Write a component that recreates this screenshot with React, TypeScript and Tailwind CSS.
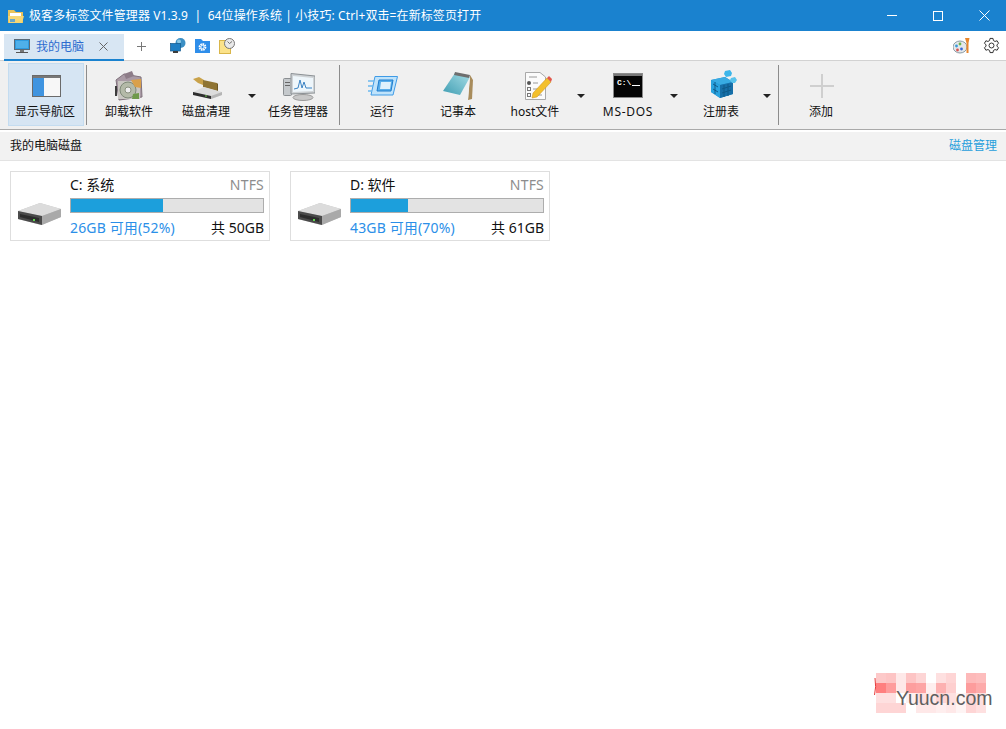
import React from "react";

const cjk = "font-['Noto_Sans','Noto_Sans_CJK_SC',sans-serif]";

const NavIcon = () => (
  <svg width="29" height="32" viewBox="0 -5 29 32">
    <rect x="0.5" y="0.5" width="28" height="21" fill="#f4f4f4" stroke="#6a6a6a" />
    <rect x="1" y="3" width="11" height="18" fill="#3f94e0" />
    <rect x="12" y="3" width="16" height="18" fill="#f7f7f7" />
    <rect x="1" y="1" width="27" height="2" fill="#777" />
  </svg>
);

const UninstallIcon = () => (
  <svg width="28" height="32" viewBox="0 -1 28 32">
    <path d="M1 9 L9 3 L26 6 L27 26 L4 29 Z" fill="#a99aa5" stroke="#7f717b" />
    <path d="M9 3 L17 0 L19 5 L11 8 Z" fill="#8d7c88" />
    <rect x="3" y="10" width="22" height="18" fill="#c9c6c2" />
    <circle cx="13" cy="19" r="8" fill="#b4baa8" stroke="#7e8a78" />
    <circle cx="13" cy="19" r="3" fill="#eeeeee" stroke="#8a9080" />
    <path d="M16 9 L26 8 L26 17 L20 16 Z" fill="#d9a04a" />
    <rect x="0" y="15" width="2" height="10" fill="#3c3c3c" />
    <path d="M18 23 L24 22 L24 28 L17 28 Z" fill="#6f9a4a" />
  </svg>
);

const CleanIcon = () => (
  <svg width="32" height="32" viewBox="-3 -7 32 32">
    <path d="M0 2 L6 0 L11 3 L10 8 L5 6 Z" fill="#c9a24a" />
    <path d="M10 3 L24 6 L24 14 L10 10 Z" fill="#8f7433" />
    <path d="M24 6 L25 7 L25 14 L24 14 Z" fill="#6e5824" />
    <path d="M0 15 L11 10 L29 15 L29 18 L18 22 L0 18 Z" fill="#dcdcdc" />
    <path d="M0 15 L18 19 L18 22 L0 18 Z" fill="#2e2e2e" />
    <path d="M18 19 L29 15 L29 18 L18 22 Z" fill="#b5b5b5" />
    <rect x="12" y="18.500" width="2" height="1" fill="#6fd14f" />
  </svg>
);

const TaskIcon = () => (
  <svg width="33" height="32" viewBox="-1 -3 33 32">
    <rect x="0.500" y="5.500" width="8" height="17" rx="1" fill="#c5c9cc" stroke="#8b8f92" />
    <rect x="2" y="9" width="5" height="1" fill="#666" />
    <rect x="2" y="12" width="5" height="1" fill="#666" />
    <path d="M8 0.500 L32 3 L32 20 L8 21 Z" fill="#cfd3d6" stroke="#8b9094" />
    <path d="M10 3 L30 5 L30 18 L10 19 Z" fill="#eef6fb" />
    <path d="M11 16 L15 15 L17 7 L19 15 L21 9 L23 15 L29 15" fill="none" stroke="#3b83c4" />
    <ellipse cx="20" cy="24.500" rx="10" ry="3" fill="#c8c8c8" stroke="#9a9a9a" />
  </svg>
);

const RunIcon = () => (
  <svg width="32" height="32" viewBox="-2 -6 32 32">
    <path d="M7 0.500 L29.500 0.500 L25 19 L3 19 Z" fill="#bfe3fb" stroke="#3f9be6" />
    <path d="M11 4 L25 4 L23 15 L9 15 Z" fill="#5aaeea" stroke="#1e7ccd" />
    <path d="M13 6 L23 6 L22 13 L12 13 Z" fill="#dff1fc" />
    <path d="M0 5 H6 M0 10 H5 M0 15 H4" stroke="#6bb8ee" strokeWidth="1.500" />
  </svg>
);

const NotepadIcon = () => (
  <svg width="30" height="32" viewBox="0 -2 30 32">
    <defs>
      <linearGradient id="noteCover" x1="0" y1="1" x2="1" y2="0">
        <stop offset="0" stopColor="#3f9db2" />
        <stop offset="1" stopColor="#a6dde6" />
      </linearGradient>
    </defs>
    <path d="M27 3 L30 8 L29 27 L25 28 Z" fill="#a88c5c" />
    <path d="M27 5 L25 28 L12 25 L0 19 Z" fill="#eef1f2" />
    <path d="M12 1 L27 5 L17 23 L0 19 Z" fill="url(#noteCover)" />
    <path d="M12 0 L27 3 L26 6 L11 3 Z" fill="#6e6e6e" />
  </svg>
);

const HostIcon = () => (
  <svg width="34" height="32" viewBox="-7 -2 34 32">
    <path d="M0.500 0.500 H15 L20.500 5 V27.500 H0.500 Z" fill="#fbfbfb" stroke="#a9a9a9" />
    <circle cx="4" cy="11" r="2" fill="#555" />
    <path d="M8 11 H13 M8 17 H15 M8 23 H17 M4 5 H12" stroke="#9a9a9a" />
    <rect x="2.500" y="15.500" width="3" height="3" fill="none" stroke="#777" />
    <rect x="2.500" y="21.500" width="3" height="3" fill="none" stroke="#777" />
    <path d="M8 21 L22 6 L26 10 L12 25 L7 26 Z" fill="#f3c02c" stroke="#c98f1a" strokeWidth="0.500" />
    <path d="M22 6 L24 4 L27 7 L26 10 Z" fill="#e2574c" />
  </svg>
);

const DosIcon = () => (
  <svg width="30" height="32" viewBox="0 -3 30 32">
    <rect x="0.500" y="0.500" width="29" height="24" fill="#050505" stroke="#8a8a8a" />
    <rect x="1" y="1" width="28" height="2" fill="#777" />
    <text x="4" y="12" fontSize="8" fontWeight="700" fill="#fff" fontFamily="'Liberation Mono', monospace">C:\</text>
    <rect x="19" y="12" width="8" height="1" fill="#fff" />
  </svg>
);

const RegIcon = () => (
  <svg width="32" height="32" viewBox="-6 0 32 32">
    <path d="M0 10 L14 7 L22 12 L22 24 L9 28 L0 22 Z" fill="#1f8ecf" />
    <path d="M0 10 L14 7 L22 12 L9 15 Z" fill="#38abe3" />
    <path d="M0 10 L9 15 L9 28 L0 22 Z" fill="#2aa3df" />
    <path d="M9 15 L22 12 L22 24 L9 28 Z" fill="#176fa8" />
    <path d="M2 14 L7 17 M2 19 L7 22 M11 19 L20 16 M11 23 L20 20 M4 12 L4 24 M13 15 L13 27 M17 14 L17 26" stroke="#0e5a8a" />
    <path d="M14 1 L19 0 L21 3 L20 6 L15 7 L13 4 Z" fill="#3cb6ea" />
    <path d="M20 8 L24 7 L26 10 L24 13 L21 13 L19 10 Z" fill="#58c3ec" />
  </svg>
);

const PlusIcon = () => (
  <svg width="26" height="32" viewBox="-2 -4 26 32">
    <path d="M12 0 V24 M0 12 H24" stroke="#cfcfcf" strokeWidth="2" />
  </svg>
);

const DriveIcon = () => (
  <svg width="43" height="22" viewBox="0 0 43 22">
    <path d="M0 8 L22 0 L43 6 L43 14 L23 22 L0 16 Z" fill="#c4c4c4" />
    <path d="M0 8 L22 0 L43 6 L24 13 Z" fill="#dcdcdc" />
    <path d="M0 8 L24 13 L24 22 L0 16 Z" fill="#4a4a4a" />
    <path d="M24 13 L43 6 L43 14 L24 22 Z" fill="#a9a9a9" />
    <path d="M2 11 L21 15 L21 19 L2 14 Z" fill="#2c2c2c" />
    <rect x="15" y="16" width="2" height="2" fill="#5fd34f" />
  </svg>
);

const TabMonitor = () => (
  <svg width="16" height="15" viewBox="0 0 16 15">
    <rect x="0.500" y="0.500" width="15" height="10" fill="#2e9be0" stroke="#5a6a78" />
    <rect x="2" y="2" width="12" height="7" fill="#4fb0ea" />
    <rect x="6" y="11" width="4" height="2" fill="#777" />
    <rect x="2" y="13" width="12" height="1" fill="#555" />
  </svg>
);

const Globe = () => (
  <svg width="16" height="16" viewBox="0 0 16 16">
    <circle cx="10.500" cy="5" r="5" fill="#3b8fc4" />
    <circle cx="9" cy="3.500" r="2" fill="#8cc9e6" />
    <rect x="0.500" y="5.500" width="10" height="7.500" fill="#1f7fc4" stroke="#14598c" strokeWidth="0.700" />
    <rect x="3" y="13" width="5" height="2" fill="#3c3c3c" />
  </svg>
);

const BlueFolder = () => (
  <svg width="15" height="15" viewBox="0 0 15 15">
    <path d="M0 1 H6 L8 3 H15 V15 H0 Z" fill="#2f8eea" />
    <circle cx="7.500" cy="9" r="3" fill="none" stroke="#fff" strokeWidth="1.800" strokeDasharray="1.600 0.700" />
    <circle cx="7.500" cy="9" r="1.700" fill="none" stroke="#fff" />
  </svg>
);

const ClockNote = () => (
  <svg width="16" height="16" viewBox="0 0 16 16">
    <rect x="0.500" y="2.500" width="11" height="13" fill="#fbe28a" stroke="#d9b64a" />
    <circle cx="10.500" cy="5.500" r="5" fill="#e9e9e9" stroke="#777" />
    <path d="M10.500 5.500 L8.500 3.500 M10.500 5.500 L13 3.500" stroke="#555" strokeWidth="0.800" />
  </svg>
);

const Palette = () => (
  <svg width="17" height="16" viewBox="0 0 17 16">
    <ellipse cx="7" cy="9" rx="7" ry="6" fill="#e4e8ea" stroke="#8a9aa4" />
    <circle cx="3.500" cy="8" r="1.400" fill="#3a9ad9" />
    <circle cx="7" cy="6" r="1.400" fill="#6cb34a" />
    <circle cx="4.500" cy="12" r="1.400" fill="#d9534f" />
    <circle cx="8.500" cy="11" r="1.400" fill="#3a6ad9" />
    <path d="M12 0 H16.500 L15.500 5 L15.500 15 H13.500 L13.500 5 Z" fill="#e8862c" />
  </svg>
);

const Gear = () => (
  <svg width="17" height="17" viewBox="0 0 24 24" fill="none" stroke="#333" strokeWidth="1.400" strokeLinejoin="round">
    <path d="M9.900 2h4.200l.6 3 2.300 1.300 2.900-1 2.100 3.600-2.300 2v2.200l2.300 2-2.100 3.600-2.900-1-2.300 1.300-.6 3H9.900l-.6-3L7 17.700l-2.900 1-2.100-3.600 2.300-2v-2.200l-2.300-2L4.100 5.300l2.900 1 2.300-1.300z" />
    <circle cx="12" cy="12" r="3.500" />
  </svg>
);

const Arrow = () => (
  <div className="flex h-[68px] w-4 items-center justify-center pt-[1px]">
    <div className="h-0 w-0 border-x-[4px] border-t-[4px] border-x-transparent border-t-[#222]" />
  </div>
);

const Sep = ({ className = "" }: { className?: string }) => (
  <div className={`my-[4px] h-[60px] w-px shrink-0 bg-[#8c8c8c] ${className}`} />
);

const Tool = ({
  label,
  icon,
  active,
  labelClass = "",
}: {
  label: string;
  icon: React.ReactNode;
  active?: boolean;
  labelClass?: string;
}) => (
  <div
    className={`flex h-[63px] w-[76px] shrink-0 flex-col items-center border ${
      active ? "border-[#c4dcf0] bg-[#d6e5f3]" : "border-transparent"
    }`}
  >
    <div className="mt-[6px] flex h-[32px] items-start justify-center">{icon}</div>
    <div className={`mt-[1px] text-xs leading-[18px] whitespace-nowrap text-[#111] ${labelClass}`}>
      {label}
    </div>
  </div>
);

const DriveCard = ({
  name,
  free,
  total,
  pct,
}: {
  name: string;
  free: string;
  total: string;
  pct: string;
}) => (
  <div className="flex h-[70px] w-[260px] border border-[#dedede] bg-white">
    <div className="flex w-[59px] shrink-0 items-start pt-[31px] pl-[7px]">
      <DriveIcon />
    </div>
    <div className="flex w-[194px] flex-col text-sm">
      <div className="mt-[3px] flex h-[20px] items-center justify-between leading-5">
        <span className="text-[#111]">{name}</span>
        <span className="tracking-[0.2px] text-[#8d8d8d]">NTFS</span>
      </div>
      <div className="mt-[3px] h-[15px] border border-[#adadad] bg-[#e3e3e3]">
        <div className={`h-full bg-[#1c9fdc] ${pct}`} />
      </div>
      <div className="mt-[5px] flex items-center justify-between leading-5">
        <span className="tracking-[0.15px] text-[#2b8fe8]">{free}</span>
        <span className="text-[#111]">{total}</span>
      </div>
    </div>
  </div>
);

const mosaic = [
  ["bg-[#fdc9c9]", "bg-[#fdc4c4]", "bg-[#fee8e8]", "bg-[#fdc4c4]", "bg-[#fdd5d5]", "bg-white", "bg-[#fee0e0]", "bg-[#fed5d5]", "bg-white", "bg-[#fdb9b9]", "bg-[#fdbdbd]"],
  ["bg-[#ff7f7f]", "bg-[#fe9c9c]", "bg-[#fee8e8]", "bg-[#fd9e9e]", "bg-[#fda4a4]", "bg-[#feeeee]", "bg-[#fdb0b0]", "bg-[#fecfcf]", "bg-white", "bg-[#fd9c9c]", "bg-[#fdaaaa]"],
  ["bg-[#fee0e0]", "bg-[#fee0e0]", "bg-white", "bg-[#fef0f0]", "bg-[#fee0e0]", "bg-[#fee8e8]", "bg-[#fed5d5]", "bg-[#fee0e0]", "bg-[#fef4f4]", "bg-[#fed5d5]", "bg-[#fee0e0]"],
  ["bg-[#fed5d5]", "bg-[#fed5d5]", "bg-[#fed5d5]", "bg-white", "bg-[#fee8e8]", "bg-[#fee8e8]", "bg-[#feeeee]", "bg-[#fee8e8]", "bg-[#fef4f4]", "bg-[#fed5d5]", "bg-[#fee0e0]"],
];

export default function App() {
  return (
    <div className={`relative h-[729px] w-[1006px] overflow-hidden bg-white ${cjk}`}>
      {/* title bar */}
      <div className="flex h-[31px] items-center bg-[#1a82cf] pl-[8px] text-white">
        <svg width="16" height="14" viewBox="0 0 16 14" className="mr-[5px]">
          <path d="M0 1 H6 L8 3 H15 V14 H0 Z" fill="#e8c35a" />
          <rect x="2" y="4" width="11" height="3" fill="#fff" />
          <path d="M0 7 H16 L14 14 H1 Z" fill="#f6d775" />
          <rect x="2" y="10" width="5" height="3" fill="#6aa7c9" />
        </svg>
        <span className="text-xs tracking-[0.1px] whitespace-pre">极客多标签文件管理器 V1.3.9  |  64位操作系统 | 小技巧: Ctrl+双击=在新标签页打开</span>
        <div className="-mr-px ml-auto flex items-center">
          <div className="flex w-[46px] justify-center">
            <div className="h-px w-[10px] bg-white" />
          </div>
          <div className="flex w-[46px] justify-center">
            <div className="h-[10px] w-[10px] border border-white" />
          </div>
          <div className="flex w-[46px] justify-center">
            <svg width="11" height="11" viewBox="0 0 11 11">
              <path d="M0.500 0.500 L10.500 10.500 M10.500 0.500 L0.500 10.500" stroke="#fff" />
            </svg>
          </div>
        </div>
      </div>

      {/* tabs row */}
      <div className="flex h-[30px] border-b border-[#d2d2d2] pl-[4px]">
        <div className="mt-[3px] flex h-[27px] w-[120px] items-center border-b-2 border-[#1a82cf] bg-[#d8e6f3] pl-[10px]">
          <TabMonitor />
          <span className="ml-[6px] text-xs text-[#2d6ccf]">我的电脑</span>
          <svg width="9" height="9" viewBox="0 0 9 9" className="ml-[15px]">
            <path d="M0.500 0.500 L8.500 8.500 M8.500 0.500 L0.500 8.500" stroke="#666" />
          </svg>
        </div>
        <div className="mt-[1px] ml-[13px] flex h-[29px] items-center">
          <svg width="9" height="9" viewBox="0 0 9 9">
            <path d="M4.500 0 V9 M0 4.500 H9" stroke="#777" />
          </svg>
        </div>
        <div className="ml-[24px] flex h-[29px] items-center gap-[9px]">
          <Globe />
          <BlueFolder />
          <ClockNote />
        </div>
        <div className="mr-[6px] ml-auto flex h-[29px] items-center gap-[13px]">
          <Palette />
          <Gear />
        </div>
      </div>

      {/* toolbar */}
      <div className="flex h-[69px] border-b border-[#a9a9a9] bg-[#f0f0f0] pl-[8px]">
        <div className="mt-[2px] mr-[2px]">
          <Tool label="显示导航区" icon={<NavIcon />} active labelClass="pr-[2px]" />
        </div>
        <Sep />
        <div className="flex pt-[2px] pl-[4px]">
          <Tool label="卸载软件" icon={<UninstallIcon />} />
          <div className="ml-px flex">
            <Tool label="磁盘清理" icon={<CleanIcon />} />
            <div className="-mt-[2px]"><Arrow /></div>
          </div>
          <Tool label="任务管理器" icon={<TaskIcon />} />
        </div>
        <Sep className="ml-[3px]" />
        <div className="flex pt-[2px] pl-[4px]">
          <Tool label="运行" icon={<RunIcon />} />
          <Tool label="记事本" icon={<NotepadIcon />} />
          <div className="ml-px flex">
            <Tool label="host文件" icon={<HostIcon />} />
            <div className="-mt-[2px]"><Arrow /></div>
          </div>
          <div className="ml-px flex">
            <Tool label="MS-DOS" icon={<DosIcon />} labelClass="tracking-[0.7px]" />
            <div className="-mt-[2px]"><Arrow /></div>
          </div>
          <div className="ml-px flex">
            <Tool label="注册表" icon={<RegIcon />} />
            <div className="-mt-[2px]"><Arrow /></div>
          </div>
        </div>
        <Sep className="ml-[3px]" />
        <div className="flex pt-[2px] pl-[4px]">
          <Tool label="添加" icon={<PlusIcon />} />
        </div>
      </div>

      {/* location bar */}
      <div className="mt-[2px] flex h-[29px] items-center justify-between border-b border-[#e3e3e3] bg-[#f2f2f2] pr-[9px] pl-[10px] text-xs">
        <span className="text-[#111]">我的电脑磁盘</span>
        <span className="text-[#1f9fdc]">磁盘管理</span>
      </div>

      {/* drives */}
      <div className="flex gap-[20px] pt-[10px] pl-[10px]">
        <DriveCard name="C: 系统" free="26GB 可用(52%)" total="共 50GB" pct="w-[48%]" />
        <DriveCard name="D: 软件" free="43GB 可用(70%)" total="共 61GB" pct="w-[29.5%]" />
      </div>

      {/* watermark */}
      <div className="absolute top-[673px] left-[876px] grid grid-cols-[repeat(11,10px)] grid-rows-[repeat(4,10px)]">
        {mosaic.flat().map((c, i) => (
          <div key={i} className={c} />
        ))}
      </div>
      <svg width="3" height="18" viewBox="0 0 3 18" className="absolute top-[678px] left-[874px]">
        <path d="M1 0 Q2.500 9 0.500 17" fill="none" stroke="#e63a3a" />
      </svg>
      <div className="absolute top-[686px] left-[896px] font-['Liberation_Sans',sans-serif] text-[19.5px] leading-6 text-[#5f5f5f]">
        Yuucn.com
      </div>
    </div>
  );
}
